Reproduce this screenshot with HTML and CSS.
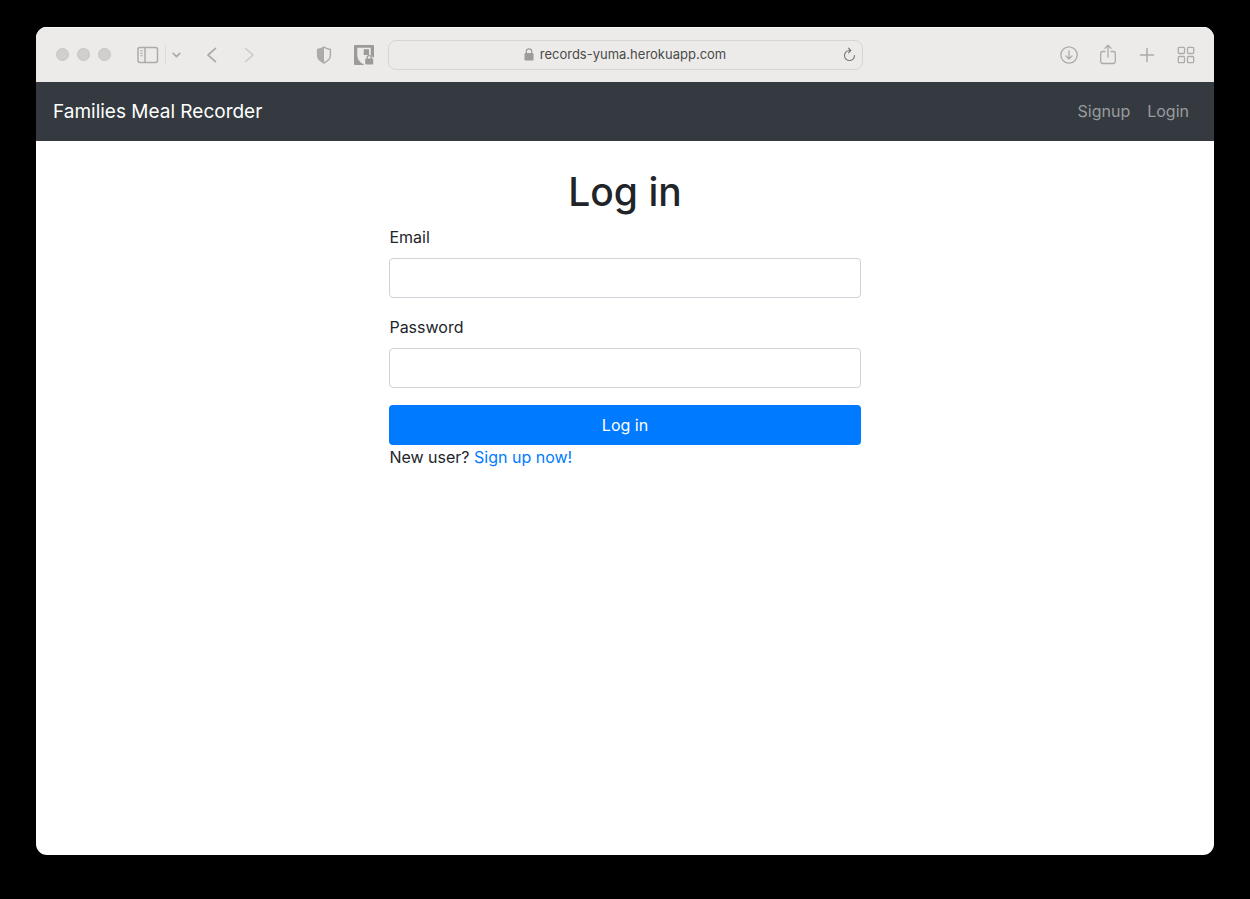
FILE: index.html
```html
<!DOCTYPE html>
<html lang="en">
<head>
    <meta charset="UTF-8">
    <meta name="viewport" content="width=device-width, initial-scale=1.0">
    <title>Families Meal Recorder</title>
    <link rel="stylesheet" href="styles.css">
</head>
<body>
    <div class="window">
        <div class="toolbar">
            <div class="toolbar-left">
                <div class="lights">
                    <span class="light"></span>
                    <span class="light"></span>
                    <span class="light"></span>
                </div>
                <div class="sidebar-group">
                    <button class="icon-button" type="button" aria-label="Sidebar">
                        <svg width="22" height="18" viewBox="0 0 22 18" fill="none" stroke="currentColor" stroke-width="1.5">
                            <rect x="1" y="1.5" width="19.5" height="15" rx="2"/>
                            <path d="M8 1.5v15"/>
                            <path d="M3.2 4.8h2.6M3.2 7.3h2.6M3.2 9.8h2.6" stroke-width="1"/>
                        </svg>
                    </button>
                    <span class="separator"></span>
                    <button class="icon-button" type="button" aria-label="Tab groups">
                        <svg width="9" height="8" viewBox="0 0 9 8" fill="none" stroke="currentColor" stroke-width="1.7" stroke-linecap="round" stroke-linejoin="round">
                            <path d="M1.2 2.3l3.3 3.3 3.3-3.3"/>
                        </svg>
                    </button>
                </div>
                <div class="history">
                    <button class="icon-button" type="button" aria-label="Back">
                        <svg width="22" height="18" viewBox="0 0 22 18" fill="none" stroke="currentColor" stroke-width="1.7" stroke-linecap="round" stroke-linejoin="round">
                            <path d="M14.5 2.3L7 9l7.5 6.7"/>
                        </svg>
                    </button>
                    <button class="icon-button disabled" type="button" aria-label="Forward">
                        <svg width="22" height="18" viewBox="0 0 22 18" fill="none" stroke="currentColor" stroke-width="1.7" stroke-linecap="round" stroke-linejoin="round">
                            <path d="M7.5 2.3L15 9l-7.5 6.7"/>
                        </svg>
                    </button>
                </div>
                <div class="extensions">
                    <button class="icon-button" type="button" aria-label="Privacy report">
                        <svg width="16" height="18" viewBox="0 0 16 18">
                            <path d="M8 1.200c2 1.300 4 2 6.400 2.300v6c0 3.400-2.400 5.500-6.400 7.500-4-2-6.400-4.100-6.400-7.500v-6C4 3.200 6 2.500 8 1.200z" fill="none" stroke="currentColor" stroke-width="1.4"/>
                            <path d="M8 1.200v15.800c-4-2-6.400-4.100-6.400-7.500v-6C4 3.200 6 2.500 8 1.200z" fill="currentColor"/>
                        </svg>
                    </button>
                    <button class="icon-button dark" type="button" aria-label="Extension">
                        <svg width="20" height="20" viewBox="0 0 20 20">
                            <rect width="20" height="20" rx="1" fill="currentColor"/>
                            <path d="M3.3 2.7h13.4V13l-6 7C5.800 17.500 3.300 14.500 3.300 10z" fill="#ecebe9"/>
                            <path d="M9.700 4.300H15V10H9.700z" fill="currentColor"/>
                            <path d="M10 20v-7.500h1.500a4 4 0 0 1 7.500 0h1V20z" fill="#ecebe9"/>
                            <rect x="11.200" y="13.500" width="8" height="6" rx="1" fill="currentColor"/>
                            <path d="M13.100 14v-1.200a2.100 2.100 0 0 1 4.200 0V14" fill="none" stroke="currentColor" stroke-width="1.3"/>
                        </svg>
                    </button>
                </div>
            </div>
            <div class="address">
                <div class="address-text">
                    <svg width="10" height="13" viewBox="0 0 10 13">
                        <rect x="0.500" y="5" width="9" height="7.500" rx="1" fill="currentColor"/>
                        <path d="M2.300 6V3.500a2.700 2.700 0 0 1 5.400 0V6" fill="none" stroke="currentColor" stroke-width="1.2"/>
                    </svg>
                    <span>records-yuma.herokuapp.com</span>
                </div>
                <button class="icon-button reload" type="button" aria-label="Reload">
                    <svg width="14" height="16" viewBox="0 0 14 16" fill="none" stroke="currentColor" stroke-width="1.1" stroke-linecap="round" stroke-linejoin="round">
                        <path d="M8.500 3.500H7.500A5 5 0 1 0 12.500 8.500"/>
                        <path d="M6.500 1.200l2.300 2.300-2.300 2.400"/>
                    </svg>
                </button>
            </div>
            <div class="toolbar-right">
                <button class="icon-button" type="button" aria-label="Downloads">
                    <svg width="20" height="22" viewBox="0 0 20 22" fill="none" stroke="currentColor" stroke-width="1.3" stroke-linecap="round" stroke-linejoin="round">
                        <circle cx="10" cy="11" r="8.2"/>
                        <path d="M10 7v7.700M7 12l3 3 3-3"/>
                    </svg>
                </button>
                <button class="icon-button" type="button" aria-label="Share">
                    <svg width="20" height="22" viewBox="0 0 20 22" fill="none" stroke="currentColor" stroke-width="1.3" stroke-linecap="round" stroke-linejoin="round">
                        <path d="M7 7.500H4.500A1.800 1.800 0 0 0 2.700 9.300v8.400a1.800 1.800 0 0 0 1.800 1.800h11a1.800 1.800 0 0 0 1.800-1.800V9.300a1.800 1.800 0 0 0-1.800-1.800H13"/>
                        <path d="M10 13V1.500M7 4.200l3-3 3 3"/>
                    </svg>
                </button>
                <button class="icon-button" type="button" aria-label="New tab">
                    <svg width="20" height="22" viewBox="0 0 20 22" fill="none" stroke="currentColor" stroke-width="1.5" stroke-linecap="round">
                        <path d="M10 4.500v13M3.500 11h13"/>
                    </svg>
                </button>
                <button class="icon-button" type="button" aria-label="Tab overview">
                    <svg width="20" height="22" viewBox="0 0 20 22" fill="none" stroke="currentColor" stroke-width="1.3">
                        <rect x="2.300" y="3.300" width="6.200" height="6.200" rx="1"/>
                        <rect x="11.500" y="3.300" width="6.200" height="6.200" rx="1"/>
                        <rect x="2.300" y="12.500" width="6.200" height="6.200" rx="1"/>
                        <rect x="11.500" y="12.500" width="6.200" height="6.200" rx="1"/>
                    </svg>
                </button>
            </div>
        </div>

        <nav class="navbar">
            <a class="navbar-brand" href="#">Families Meal Recorder</a>
            <div class="navbar-links">
                <a href="#">Signup</a>
                <a href="#">Login</a>
            </div>
        </nav>

        <main class="container">
            <h1>Log in</h1>
            <form class="login-form">
                <div class="form-group">
                    <label for="email">Email</label>
                    <input type="email" id="email" class="form-control">
                </div>
                <div class="form-group">
                    <label for="password">Password</label>
                    <input type="password" id="password" class="form-control">
                </div>
                <button type="submit" class="btn">Log in</button>
            </form>
            <p>New user? <a href="#">Sign up now!</a></p>
        </main>
    </div>
</body>
</html>
```
FILE: styles.css
```css
* {
    box-sizing: border-box;
}
body {
    margin: 0;
    padding: 27px 36px 44px;
    min-height: 100vh;
    display: flex;
    background: #000;
    color: #212529;
    font-family: Inter, "Liberation Sans", sans-serif;
    font-size: 16px;
    line-height: 25px;
}
.window {
    flex: 1;
    background: #fff;
    border-radius: 11px;
    overflow: hidden;
}

/* browser toolbar */
.toolbar {
    display: grid;
    grid-template-columns: 1fr 475px 1fr;
    align-items: center;
    height: 55px;
    background: #ecebe9;
    box-shadow: inset 0 1px #f8f8f7;
    color: #acaba9;
}
.toolbar svg {
    display: block;
}
.icon-button {
    padding: 0;
    border: none;
    background: none;
    color: inherit;
}
.icon-button.disabled {
    color: #d0cfcd;
}
.icon-button.dark {
    color: #9c9b99;
}
.toolbar-left {
    display: flex;
    align-items: center;
    padding: 0 14px 0 20px;
}
.lights {
    display: flex;
    gap: 8px;
}
.light {
    width: 13px;
    height: 13px;
    border: 1px solid #c5c4c2;
    border-radius: 50%;
    background: #d0cfcd;
}
.sidebar-group {
    display: flex;
    align-items: center;
    gap: 6px;
    margin-left: 26px;
}
.separator {
    width: 1px;
    height: 19px;
    background: #dddcda;
}
.history {
    display: flex;
    gap: 15px;
    margin-left: 20px;
}
.extensions {
    display: flex;
    align-items: center;
    gap: 22px;
    margin-left: auto;
}
.address {
    display: flex;
    align-items: center;
    height: 30px;
    padding: 0 6px 0 20px;
    border: 1px solid #d6d5d3;
    border-radius: 8px;
    font-size: 13px;
}
.address-text {
    flex: 1;
    display: flex;
    align-items: center;
    justify-content: center;
    gap: 6px;
    color: #9c9b99;
}
.address-text span {
    color: #4a4a4a;
}
.reload {
    color: #777;
}
.toolbar-right {
    display: flex;
    justify-content: flex-end;
    gap: 19px;
    padding-right: 18px;
}

/* app */
.navbar {
    display: flex;
    align-items: center;
    justify-content: space-between;
    height: 59px;
    padding: 0 25px 0 17px;
    background: #343a40;
}
.navbar a {
    text-decoration: none;
}
.navbar-brand {
    color: #fff;
    font-size: 19px;
}
.navbar-links {
    display: flex;
    gap: 17px;
}
.navbar-links a {
    color: #999c9f;
}
.container {
    width: 40%;
    margin: 0 auto;
    padding-top: 26px;
}
h1 {
    margin: 0 0 8px;
    font-size: 39px;
    font-weight: 500;
    line-height: 50px;
    text-align: center;
}
.form-group {
    margin-bottom: 17px;
}
.form-group label {
    display: block;
    margin-bottom: 8px;
}
.form-control {
    display: block;
    width: 100%;
    height: 40px;
    padding: 6px 12px;
    border: 1px solid #ced4da;
    border-radius: 4px;
    font: inherit;
}
.btn {
    display: block;
    width: 100%;
    height: 40px;
    border: none;
    border-radius: 4px;
    background: #007bff;
    color: #fff;
    font: inherit;
}
.container p {
    margin: 0;
}
.container a {
    color: #007bff;
    text-decoration: none;
}
```
